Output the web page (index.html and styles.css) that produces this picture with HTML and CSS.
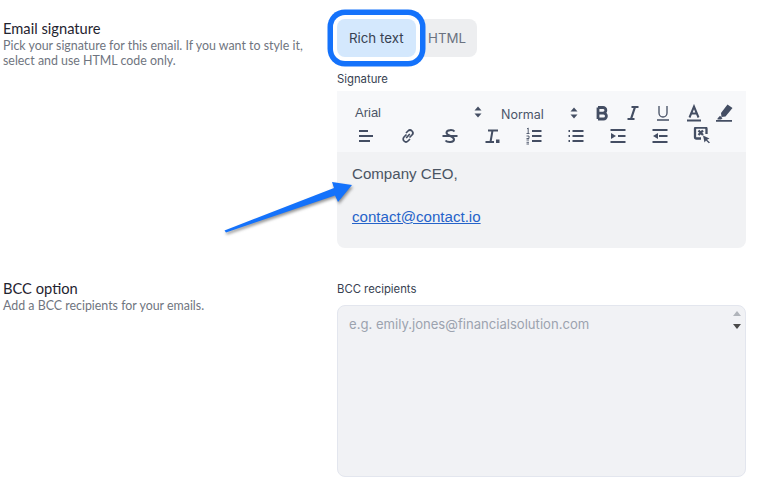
FILE: index.html
```html
<!DOCTYPE html>
<html lang="en">
<head>
<meta charset="utf-8">
<title>Email signature</title>
<link rel="stylesheet" href="styles.css">
</head>
<body>
<main class="page">
  <section class="row row-sig">
    <div class="intro">
      <h2>Email signature</h2>
      <p>Pick your signature for this email. If you want to style it, select and use HTML code only.</p>
    </div>
    <div class="field">
      <div class="tabs">
        <div class="tab active">Rich text</div>
        <div class="tab">HTML</div>
      </div>
      <div class="label label-sig">Signature</div>
      <div class="toolbar">
        <div class="tool-row first">
          <div class="select s-font"><span>Arial</span>
            <svg width="8" height="12" viewBox="0 0 8 12"><path d="M4 0.5 7.5 4.5H0.5ZM4 11.5 0.5 7.5H7.5Z"/></svg></div>
          <div class="select s-size"><span>Normal</span>
            <svg width="8" height="12" viewBox="0 0 8 12"><path d="M4 0.5 7.5 4.5H0.5ZM4 11.5 0.5 7.5H7.5Z"/></svg></div>
          <div class="tool">
            <svg width="18" height="18" viewBox="0 0 18 18" class="line bold"><path d="M5 3.500V15M5 3.500H10A2.800 2.800 0 0 1 10 9.200H5M10 9.200H10.500A2.900 2.900 0 0 1 10.500 15H5"/></svg></div>
          <div class="tool">
            <svg width="18" height="18" viewBox="0 0 18 18" class="line"><path d="M7.500 3H14.500M3.500 15H10.500M11 3 7 15" stroke-width="2.200"/></svg></div>
          <div class="tool">
            <svg width="18" height="18" viewBox="0 0 18 18" class="line thin"><path d="M5 2V9A4 4 0 0 0 13 9V2M3 16H15"/></svg></div>
          <div class="tool">
            <svg width="18" height="18" viewBox="0 0 18 18" class="line thick"><path d="M4.500 13.500 9 2.500 13.500 13.500M6.200 9.500H11.800M2 16.500H16"/></svg></div>
          <div class="tool">
            <svg width="18" height="18" viewBox="0 0 18 18"><path d="M12.500 0.500 17.500 4 10.500 12.500 6.500 13 6 9ZM2.500 14.500 5 11.800 7.500 14.200 6 15.500H2.500ZM1 16H17V17.800H1Z"/></svg></div>
        </div>
        <div class="tool-row second">
          <div class="tool">
            <svg width="18" height="18" viewBox="0 0 18 18" class="line thick"><path d="M2 4H11M2 9H16M2 14H13"/></svg></div>
          <div class="tool">
            <svg width="18" height="18" viewBox="0 0 18 18" class="line link"><path d="M7.500 7.500 5 10A2.800 2.800 0 0 0 9 14L11 12M10.500 10.500 13 8A2.800 2.800 0 0 0 9 4L7 6M7.200 11 10.800 7"/></svg></div>
          <div class="tool">
            <svg width="18" height="18" viewBox="0 0 18 18" class="line thick"><path d="M13.500 4.500C12 2.500 5.500 2.500 5.500 5.800C5.500 9 13 8.500 13 12.500C13 15.800 6 15.500 4.500 13.500M1.500 9H16.500"/></svg></div>
          <div class="tool">
            <svg width="18" height="18" viewBox="0 0 18 18" class="line thick"><path d="M5 3.500H15M9.500 3.500 7.500 15M2.500 15H11"/><path class="solid" d="M13 12.500H16.500V16H13Z"/></svg></div>
          <div class="tool">
            <svg width="18" height="18" viewBox="0 0 18 18" class="line thick"><path d="M7 4H16.500M7 9H16.500M7 14H16.500"/><path class="small" d="M2 2 3.200 1V6M1.500 6.500H4.500M1.500 9H4M4 9V11.500H1.500M1.500 13H4M1.500 15.300H4M1.500 17H4"/></svg></div>
          <div class="tool">
            <svg width="18" height="18" viewBox="0 0 18 18" class="line thick"><path d="M5.500 4H16.500M5.500 9H16.500M5.500 14H16.500M1.500 4H3M1.500 9H3M1.500 14H3"/></svg></div>
          <div class="tool">
            <svg width="18" height="18" viewBox="0 0 18 18" class="line thick"><path d="M1.500 3H16.500M9 9H16.500M1.500 15H16.500"/><path class="solid" d="M2 6 7 9 2 12Z"/></svg></div>
          <div class="tool">
            <svg width="18" height="18" viewBox="0 0 18 18" class="line thick"><path d="M1.500 3H16.500M8 9H16.500M1.500 15H16.500"/><path class="solid" d="M7 6 2 9 7 12Z"/></svg></div>
          <div class="tool">
            <svg width="18" height="18" viewBox="0 1.500 18 18" class="line clear"><path d="M8 13H3.500A1.500 1.500 0 0 1 2 11.500V3.500A1.500 1.500 0 0 1 3.500 2H12A1.500 1.500 0 0 1 13.500 3.500V8.500M5.500 5 10 9.500M10 5 5.500 9.500"/><path class="solid" d="M10 10 16.500 13 14 14.300 17 17 15.800 17.800 13 15 11.500 17Z"/></svg></div>
        </div>
      </div>
      <div class="editor">
        <p>Company CEO,</p>
        <p class="gap"><a href="#">contact@contact.io</a></p>
      </div>
    </div>
  </section>
  <section class="row row-bcc">
    <div class="intro">
      <h2>BCC option</h2>
      <p>Add a BCC recipients for your emails.</p>
    </div>
    <div class="field">
      <div class="label">BCC recipients</div>
      <div class="textarea">
        <span class="placeholder">e.g. emily.jones@financialsolution.com</span>
        <div class="spin">
          <svg width="8" height="5" viewBox="0 0 8 5" class="up"><path d="M4 0 8 5H0Z"/></svg>
          <svg width="8" height="5" viewBox="0 0 8 5" class="down"><path d="M0 0H8L4 5Z"/></svg>
        </div>
      </div>
    </div>
  </section>
  <svg class="pointer" width="140" height="62" viewBox="0 0 140 62"><path d="M4.500 52.500 114 10 112 4 132 7 118 24 115 17.500 6 54.500Z"/></svg>
</main>
</body>
</html>
```
FILE: styles.css
```css
* { box-sizing: border-box; }
html, body { margin: 0; padding: 0; background: #fff; }
body { font-family: Inter, "Liberation Sans", sans-serif; overflow: hidden; }
.page { position: relative; width: 758px; height: 487px; padding: 19px 12px 0 3px; }
.row { display: grid; grid-template-columns: 334px 409px; }
.row-bcc { margin-top: 31px; }
.intro h2 { margin: 0; font-family: Lato, sans-serif; font-size: 14.700px; line-height: 19px; font-weight: 400; color: #1f2430; }
.intro p { margin: 0; width: 304px; font-family: Lato, sans-serif; font-size: 12.400px; line-height: 15px; color: #6f7580; }
.tabs { display: flex; width: 140px; height: 38px; background: #edeef0; border-radius: 8px; }
.tab { height: 38px; line-height: 38px; font-size: 13.300px; color: #6b7280; padding-left: 12px; }
.tab.active { width: 79px; flex: none; background: #d4e8fd; color: #374151; border-radius: 8px; box-shadow: 0 0 0 4px #fff, 0 0 0 9.500px #1472fb; }
.label { font-size: 11.300px; line-height: 14px; color: #374151; }
.label-sig { margin-top: 15px; }
.toolbar { margin-top: 5px; height: 61px; padding-top: 10px; background: #f7f8fa; }
.tool-row { display: flex; align-items: center; }
.first { height: 24px; padding-left: 18px; }
.second { height: 22px; padding-left: 8px; }
.select { display: flex; flex: none; align-items: center; justify-content: space-between; font-family: "Liberation Sans", sans-serif; font-size: 13px; color: #4b5568; }
.select svg { fill: #444e63; flex: none; }
.s-font { width: 127px; padding-bottom: 2px; }
.s-size { width: 77px; margin-left: 19px; margin-right: 9px; padding-top: 3px; font-family: Inter, sans-serif; font-size: 12.500px; }
.s-size svg { margin-top: -4px; }
.first .tool { width: 30.500px; }
.tool { width: 42px; height: 22px; display: flex; align-items: center; justify-content: center; flex: none; }
.tool svg { fill: #444e63; }
.line { fill: none !important; stroke: #444e63; stroke-width: 1.800; }
.thick { stroke-width: 2; }
.bold { stroke-width: 2.800; }
.thin { stroke-width: 1.300; }
.link { stroke-width: 1.700; }
.clear { stroke-width: 2.300; }
.solid { fill: #444e63; stroke: none; }
.small { stroke-width: 0.900; }
.editor { height: 96px; padding: 12px 15px; background: #f1f2f4; border-radius: 0 0 8px 8px; font-family: "Liberation Sans", sans-serif; font-size: 15.100px; line-height: 19px; color: #4b5563; }
.editor p { margin: 0; }
.editor .gap { margin-top: 24px; }
.editor a { color: #2563c9; }
.row-bcc .label { padding-top: 2px; line-height: 16px; }
.textarea { display: flex; justify-content: space-between; align-items: flex-start; height: 172px; margin-top: 8px; background: #f1f2f5; border: 1px solid #e3e6ee; border-radius: 8px; padding: 0 0 0 11px; }
.placeholder { margin-top: 9px; font-size: 13.100px; line-height: 18px; color: #9ca3af; }
.spin { width: 16px; height: 30px; padding-top: 5px; display: flex; flex-direction: column; align-items: center; gap: 8px; }
.up { fill: #b0b4ba; }
.down { fill: #4a4a4a; }
.pointer { position: absolute; left: 220px; top: 178px; filter: drop-shadow(1px 2px 1.500px rgba(60, 60, 60, .55)); }
.pointer path { fill: #1472fb; }
```
